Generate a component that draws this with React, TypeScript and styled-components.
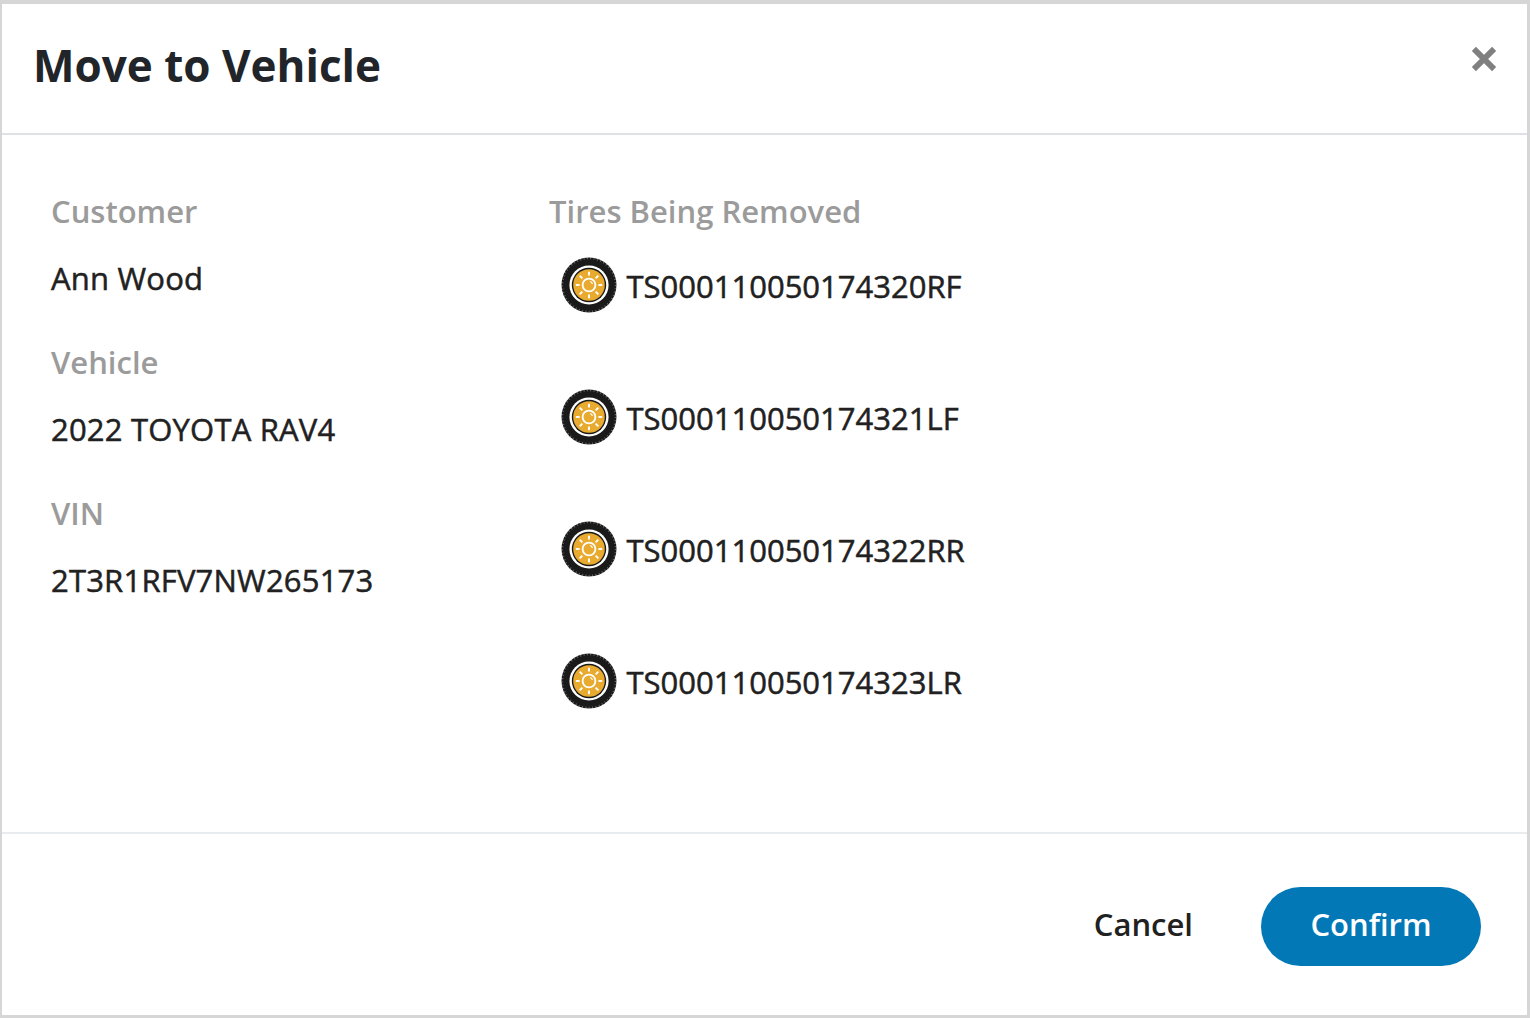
import { createGlobalStyle } from 'styled-components';
import styled from 'styled-components';

const GlobalStyle = createGlobalStyle`
  html, body {
    margin: 0;
    padding: 0;
    background: #fff;
  }

  body {
    font-family: 'Open Sans', 'Noto Sans', sans-serif;
  }
`;

const details = [
  { label: 'Customer', value: 'Ann Wood' },
  { label: 'Vehicle', value: '2022 TOYOTA RAV4' },
  { label: 'VIN', value: '2T3R1RFV7NW265173' },
];

const tires = [
  'TS000110050174320RF',
  'TS000110050174321LF',
  'TS000110050174322RR',
  'TS000110050174323LR',
];

const spokes = [0, 45, 90, 135, 180, 225, 270, 315];

const TireIcon = () => (
  <svg width='56' height='56' viewBox='0 0 56 56'>
    <circle cx='28' cy='28' r='27.5' fill='#1a1a1a' />
    <circle cx='28' cy='28' r='26.6' fill='none' stroke='#fff' strokeOpacity='0.35' strokeWidth='1.8' strokeDasharray='1 2.4' />
    <circle cx='28' cy='28' r='19.6' fill='#fff' />
    <circle cx='28' cy='28' r='17.2' fill='#1a1a1a' />
    <circle cx='28' cy='28' r='15.8' fill='#e9ab2f' />
    <circle cx='28' cy='28' r='6.4' fill='none' stroke='#fff' strokeWidth='1.8' />
    <path d='M29 24.5 A3.6 3.6 0 0 1 31.5 27' fill='none' stroke='#fff' strokeWidth='1.2' />
    {spokes.map((angle) => (
      <line
        key={angle}
        x1='28'
        y1='18.6'
        x2='28'
        y2='14.8'
        stroke='#fff'
        strokeWidth='1.9'
        transform={`rotate(${angle} 28 28)`}
      />
    ))}
  </svg>
);

const CloseIcon = () => (
  <svg width='26' height='26' viewBox='0 0 26 26'>
    <path d='M4 4 L22 22 M22 4 L4 22' stroke='#808080' strokeWidth='6.4' strokeLinecap='square' transform='translate(13 13) scale(0.9) translate(-13 -13)' />
  </svg>
);

const App = () => {
  return (
    <>
      <GlobalStyle />
      <Modal>
        <Header>
          <Title>Move to Vehicle</Title>
          <CloseBtn aria-label='Close'>
            <CloseIcon />
          </CloseBtn>
        </Header>

        <Body>
          <DetailColumn>
            {details.map(({ label, value }) => (
              <DetailItem key={label}>
                <Label>{label}</Label>
                <Value>{value}</Value>
              </DetailItem>
            ))}
          </DetailColumn>

          <TireColumn>
            <Label>Tires Being Removed</Label>
            <TireList>
              {tires.map((tire) => (
                <TireRow key={tire}>
                  <TireIcon />
                  <TireName>{tire}</TireName>
                </TireRow>
              ))}
            </TireList>
          </TireColumn>
        </Body>

        <Footer>
          <CancelBtn>Cancel</CancelBtn>
          <ConfirmBtn>Confirm</ConfirmBtn>
        </Footer>
      </Modal>
    </>
  );
};

export default App;

const Modal = styled.div`
  box-sizing: border-box;
  display: flex;
  flex-direction: column;

  width: 1530px;
  height: 1018px;

  background: #fff;
  border-style: solid;
  border-color: #d6d6d6;
  border-width: 4px 3px 3px 2px;
`;

const Header = styled.header`
  box-sizing: border-box;
  display: flex;
  justify-content: space-between;
  align-items: flex-start;

  height: 131px;
  padding: 0 30px 0 31px;
  border-bottom: 2px solid #dee2e6;
`;

const Title = styled.h1`
  margin: 30px 0 0;

  color: #212529;
  font-size: 44px;
  font-weight: 700;
  line-height: 62px;
`;

const CloseBtn = styled.button`
  display: flex;

  margin-top: 42px;
  padding: 0;

  background: none;
  border: 0;
`;

const Body = styled.main`
  display: flex;
  flex: 1;

  padding: 54px 0 0 49px;
`;

const DetailColumn = styled.section`
  display: flex;
  flex-direction: column;
  gap: 40px;

  width: 498px;
`;

const DetailItem = styled.div`
  display: flex;
  flex-direction: column;
  gap: 23px;
`;

const Label = styled.div`
  color: #9b9b9b;
  font-size: 31px;
  font-weight: 600;
  line-height: 44px;
`;

const Value = styled.div`
  color: #212121;
  font-size: 31px;
  font-weight: 400;
  line-height: 44px;
  letter-spacing: 0.2px;
  -webkit-text-stroke: 0.5px #212121;
`;

const TireColumn = styled.section`
  display: flex;
  flex-direction: column;
`;

const TireList = styled.div`
  display: flex;
  flex-direction: column;
  gap: 76px;

  margin-top: 24px;
  padding-left: 11.5px;
`;

const TireRow = styled.div`
  display: flex;
  align-items: center;
  gap: 10px;
`;

const TireName = styled.span`
  padding-top: 2px;

  color: #212121;
  font-size: 31px;
  font-weight: 400;
  line-height: 44px;
  -webkit-text-stroke: 0.5px #212121;
`;

const Footer = styled.footer`
  box-sizing: border-box;
  display: flex;
  justify-content: flex-end;
  align-items: center;
  gap: 68px;

  height: 183px;
  padding: 4px 46px 0 0;
  border-top: 2px solid #e9ecef;
`;

const CancelBtn = styled.button`
  padding: 0 0 6px;

  color: #212121;
  font-family: inherit;
  font-size: 31px;
  font-weight: 600;

  background: none;
  border: 0;
`;

const ConfirmBtn = styled.button`
  width: 220px;
  height: 79px;
  padding: 0 0 5px;

  color: #fff;
  font-family: inherit;
  font-size: 31px;
  font-weight: 600;

  background: #0278b7;
  border: 0;
  border-radius: 40px;
`;
